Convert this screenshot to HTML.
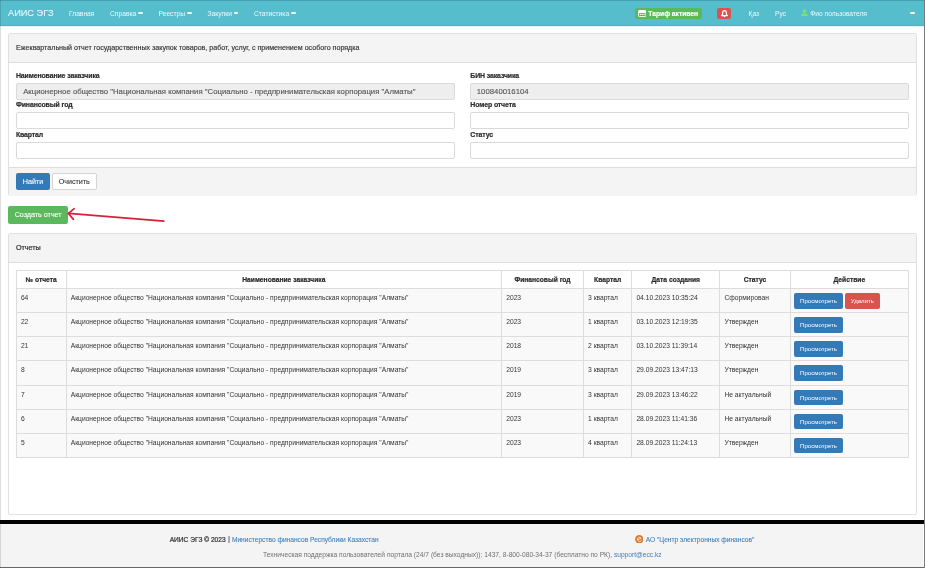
<!DOCTYPE html>
<html><head><meta charset="utf-8">
<style>
*{box-sizing:border-box;margin:0;padding:0}
html,body{width:925px;height:568px;overflow:hidden;background:#fff;font-family:"Liberation Sans",sans-serif;color:#333}
.abs{position:absolute}
#nav{left:0;top:0;width:925px;height:26px;background:#56bdcd;border-bottom:1px solid #4cb3c6}
.nt{position:absolute;color:#eef8fa;font-size:6.7px;line-height:8px;white-space:nowrap}
.brand{font-size:9.2px;line-height:10px;color:#e6f5f8;-webkit-text-stroke:0.12px currentColor}
.caret{display:inline-block;width:4.6px;height:2.3px;background:#f4fbfc;border-radius:1.2px;margin-left:2px;vertical-align:1.2px}
.panel{position:absolute;left:8px;width:909px;border:1px solid #e0e0e0;border-radius:2px;background:#fff}
.ph{position:absolute;left:0;top:0;width:100%;background:#f4f4f4;border-bottom:1px solid #ddd}
.pf{position:absolute;left:0;width:100%;background:#f4f4f4;border-top:1px solid #ddd}
.t{position:absolute;white-space:nowrap;line-height:8px;-webkit-text-stroke:0.15px currentColor}
.lbl{font-weight:bold;font-size:6.95px;letter-spacing:-0.12px;color:#2a2a2a;-webkit-text-stroke:0.18px currentColor}
.inp{position:absolute;height:17px;border:1px solid #dadada;border-radius:2px;background:#fff}
.inp.dis{background:#eee}
.btn{position:absolute;border-radius:2px;color:#fff;-webkit-text-stroke:0.1px currentColor;font-size:7.15px;line-height:8px;text-align:center;white-space:nowrap}
table{position:absolute;border-collapse:collapse;table-layout:fixed}
td,th{border:1px solid #ddd;font-size:6.7px;line-height:8px;vertical-align:top;white-space:nowrap;overflow:hidden}
th{font-weight:bold;text-align:center;background:#fff;vertical-align:middle}
td{background:#f9f9f9}
.hl{position:absolute;left:16.3px;width:892.2px;height:1px;background:#ddd}
.vl{position:absolute;top:270px;width:1px;height:187.7px;background:#ddd}
.th{font-weight:bold;font-size:6.7px;text-align:center;color:#2a2a2a;-webkit-text-stroke:0.2px currentColor}
.td{font-size:6.7px;-webkit-text-stroke:0}
.bb{position:absolute;background:#337ab7;color:#fff;border-radius:2px;height:15.5px;text-align:center;font-size:6.1px;line-height:15.5px;white-space:nowrap}
.br{background:#d9534f}
#wrap{position:absolute;left:0;top:0;width:925px;height:568px;will-change:transform}
</style></head><body><div id="wrap">

<div id="nav" class="abs">
  <div class="abs" style="left:0;top:0;width:925px;height:1px;background:#469fae"></div>
  <div class="nt brand" style="left:8px;top:7.6px">АИИС ЭГЗ</div>
  <div class="nt" style="left:69px;top:9.5px">Главная</div>
  <div class="nt" style="left:110px;top:9.5px">Справка<span class="caret"></span></div>
  <div class="nt" style="left:158.5px;top:9.5px">Реестры<span class="caret"></span></div>
  <div class="nt" style="left:207.5px;top:9.5px">Закупки<span class="caret"></span></div>
  <div class="nt" style="left:254px;top:9.5px">Статистика<span class="caret"></span></div>
  <div class="abs" style="left:634.8px;top:8.3px;width:67px;height:11.1px;background:#5cb85c;border-radius:2px"></div>
  <svg class="abs" style="left:638px;top:10px" width="8.4" height="7" viewBox="0 0 8.4 7"><rect x="0.5" y="0.5" width="7.4" height="6" rx="0.8" fill="none" stroke="#fff" stroke-width="0.9"/><rect x="0.5" y="0.5" width="7.4" height="2.6" fill="#fff"/><rect x="1.8" y="4" width="1.2" height="1" fill="#fff"/><rect x="3.6" y="4" width="1.2" height="1" fill="#fff"/><rect x="5.4" y="4" width="1.2" height="1" fill="#fff"/></svg>
  <div class="nt" style="left:648.3px;top:10px;font-weight:bold;color:#fff;-webkit-text-stroke:0.15px #fff">Тариф активен</div>
  <div class="abs" style="left:717px;top:8.4px;width:13.8px;height:11px;background:#d9534f;border-radius:2px"></div>
  <svg class="abs" style="left:720.5px;top:9.8px" width="7" height="7.4" viewBox="0 0 7 7.4"><path d="M3.5 0.6 C2 0.6 1.6 1.8 1.6 3 L1.6 4.4 L0.6 5.6 L6.4 5.6 L5.4 4.4 L5.4 3 C5.4 1.8 5 0.6 3.5 0.6 Z" fill="none" stroke="#fff" stroke-width="1.1" stroke-linejoin="round"/><circle cx="3.5" cy="6.5" r="0.8" fill="#fff"/></svg>
  <div class="nt" style="left:748.5px;top:9.5px">Қаз</div>
  <div class="nt" style="left:775px;top:9.5px">Рус</div>
  <svg class="abs" style="left:801px;top:8.8px" width="7" height="7" viewBox="0 0 7 7"><circle cx="3.5" cy="2" r="1.8" fill="#7ee06b"/><path d="M2.6 3.6 L4.4 3.6 L4.4 4.6 L6.8 5.6 L6.8 6.9 L0.2 6.9 L0.2 5.6 L2.6 4.6 Z" fill="#7ee06b"/></svg>
  <div class="nt" style="left:810.2px;top:9.5px">Фио пользователя</div>
  <div class="abs" style="left:909.6px;top:12px;width:5.4px;height:2.2px;background:#fff;border-radius:1.1px"></div>
</div>
<div class="abs" style="left:0;top:26px;width:925px;height:1px;background:#e3f4f7"></div>
<div class="abs" style="left:924px;top:0;width:1px;height:568px;background:#7a7a7a;z-index:5"></div>
<div class="abs" style="left:923px;top:525px;width:1px;height:41px;background:#fff;z-index:5"></div>
<div class="abs" style="left:0;top:0;width:1px;height:568px;background:rgba(0,0,0,0.13);z-index:5"></div>

<!-- panel 1 -->
<div class="panel" style="top:33px;height:162.5px">
  <div class="ph" style="height:29px"></div>
  <div class="t" style="left:7.1px;top:10px;font-size:7.12px">Ежеквартальный отчет государственных закупок товаров, работ, услуг, с применением особого порядка</div>
  <div class="t lbl" style="left:6.9px;top:38px">Наименование заказчика</div>
  <div class="inp dis" style="left:7px;top:49px;width:439px"></div>
  <div class="t" style="left:14.2px;top:54px;font-size:7.78px;color:#555;-webkit-text-stroke:0.12px currentColor">Акционерное общество "Национальная компания "Социально - предпринимательская корпорация "Алматы"</div>
  <div class="t lbl" style="left:461.3px;top:38px">БИН заказчика</div>
  <div class="inp dis" style="left:461px;top:49px;width:439px"></div>
  <div class="t" style="left:467.8px;top:54px;font-size:7.78px;color:#555;-webkit-text-stroke:0.12px currentColor">100840016104</div>
  <div class="t lbl" style="left:6.9px;top:67px">Финансовый год</div>
  <div class="inp" style="left:7px;top:78px;width:439px"></div>
  <div class="t lbl" style="left:461.3px;top:67px">Номер отчета</div>
  <div class="inp" style="left:461px;top:78px;width:439px"></div>
  <div class="t lbl" style="left:6.9px;top:97px">Квартал</div>
  <div class="inp" style="left:7px;top:108px;width:439px"></div>
  <div class="t lbl" style="left:461.3px;top:97px">Статус</div>
  <div class="inp" style="left:461px;top:108px;width:439px"></div>
  <div class="pf" style="top:133px;height:28.5px"></div>
  <div class="btn" style="left:7px;top:139px;width:34px;height:17.3px;background:#337ab7;padding-top:5.2px">Найти</div>
  <div class="btn" style="left:43px;top:139px;width:44.5px;height:17.3px;background:#fff;border:1px solid #d4d4d4;color:#333;padding-top:4.2px">Очистить</div>
</div>

<div class="btn" style="left:8px;top:206px;width:60.3px;height:17.5px;background:#5cb85c;padding-top:5.2px">Создать отчет</div>

<svg class="abs" style="left:60px;top:200px" width="120" height="30" viewBox="60 200 120 30"><g fill="none" stroke="#d8203a" stroke-width="1.7" stroke-linecap="round" stroke-linejoin="round"><path d="M163.8 221.1 L68.6 213.4"/><path d="M74.2 208.7 L68.4 213.4 L73.4 219.4"/></g></svg>
<!-- panel 2 -->
<div class="panel" style="top:233px;height:282px">
  <div class="ph" style="height:29px"></div>
  <div class="t" style="left:6.9px;top:10px;font-size:7.2px;-webkit-text-stroke:0.22px currentColor">Отчеты</div>
</div>
<div class="abs" style="left:16.3px;top:288.7px;width:892.2px;height:168.5px;background:#f9f9f9"></div>
<div class="hl" style="top:270.0px"></div>
<div class="hl" style="top:288.2px"></div>
<div class="hl" style="top:312.3px"></div>
<div class="hl" style="top:336.3px"></div>
<div class="hl" style="top:360.4px"></div>
<div class="hl" style="top:384.5px"></div>
<div class="hl" style="top:408.5px"></div>
<div class="hl" style="top:432.6px"></div>
<div class="hl" style="top:456.7px"></div>
<div class="vl" style="left:15.8px"></div>
<div class="vl" style="left:65.6px"></div>
<div class="vl" style="left:501.1px"></div>
<div class="vl" style="left:583.0px"></div>
<div class="vl" style="left:631.3px"></div>
<div class="vl" style="left:719.3px"></div>
<div class="vl" style="left:789.7px"></div>
<div class="vl" style="left:908.0px"></div>
<div class="t th" style="left:16.3px;width:49.8px;top:276.0px">№ отчета</div>
<div class="t th" style="left:66.1px;width:435.5px;top:276.0px">Наименование заказчика</div>
<div class="t th" style="left:501.6px;width:81.9px;top:276.0px">Финансовый год</div>
<div class="t th" style="left:583.5px;width:48.3px;top:276.0px">Квартал</div>
<div class="t th" style="left:631.8px;width:88.0px;top:276.0px">Дата создания</div>
<div class="t th" style="left:719.8px;width:70.4px;top:276.0px">Статус</div>
<div class="t th" style="left:790.2px;width:118.3px;top:276.0px">Действие</div>
<div class="t td" style="left:20.9px;top:294.2px">64</div>
<div class="t td" style="left:70.7px;top:294.2px">Акционерное общество &quot;Национальная компания &quot;Социально - предпринимательская корпорация &quot;Алматы&quot;</div>
<div class="t td" style="left:506.2px;top:294.2px">2023</div>
<div class="t td" style="left:588.1px;top:294.2px">3 квартал</div>
<div class="t td" style="left:636.4px;top:294.2px">04.10.2023 10:35:24</div>
<div class="t td" style="left:724.4px;top:294.2px">Сформирован</div>
<div class="bb" style="left:794.1px;top:293.2px;width:48.9px">Просмотреть</div>
<div class="bb br" style="left:845px;top:293.2px;width:34.8px">Удалить</div>
<div class="t td" style="left:20.9px;top:318.3px">22</div>
<div class="t td" style="left:70.7px;top:318.3px">Акционерное общество &quot;Национальная компания &quot;Социально - предпринимательская корпорация &quot;Алматы&quot;</div>
<div class="t td" style="left:506.2px;top:318.3px">2023</div>
<div class="t td" style="left:588.1px;top:318.3px">1 квартал</div>
<div class="t td" style="left:636.4px;top:318.3px">03.10.2023 12:19:35</div>
<div class="t td" style="left:724.4px;top:318.3px">Утвержден</div>
<div class="bb" style="left:794.1px;top:317.3px;width:48.9px">Просмотреть</div>
<div class="t td" style="left:20.9px;top:342.3px">21</div>
<div class="t td" style="left:70.7px;top:342.3px">Акционерное общество &quot;Национальная компания &quot;Социально - предпринимательская корпорация &quot;Алматы&quot;</div>
<div class="t td" style="left:506.2px;top:342.3px">2018</div>
<div class="t td" style="left:588.1px;top:342.3px">2 квартал</div>
<div class="t td" style="left:636.4px;top:342.3px">03.10.2023 11:39:14</div>
<div class="t td" style="left:724.4px;top:342.3px">Утвержден</div>
<div class="bb" style="left:794.1px;top:341.3px;width:48.9px">Просмотреть</div>
<div class="t td" style="left:20.9px;top:366.4px">8</div>
<div class="t td" style="left:70.7px;top:366.4px">Акционерное общество &quot;Национальная компания &quot;Социально - предпринимательская корпорация &quot;Алматы&quot;</div>
<div class="t td" style="left:506.2px;top:366.4px">2019</div>
<div class="t td" style="left:588.1px;top:366.4px">3 квартал</div>
<div class="t td" style="left:636.4px;top:366.4px">29.09.2023 13:47:13</div>
<div class="t td" style="left:724.4px;top:366.4px">Утвержден</div>
<div class="bb" style="left:794.1px;top:365.4px;width:48.9px">Просмотреть</div>
<div class="t td" style="left:20.9px;top:390.5px">7</div>
<div class="t td" style="left:70.7px;top:390.5px">Акционерное общество &quot;Национальная компания &quot;Социально - предпринимательская корпорация &quot;Алматы&quot;</div>
<div class="t td" style="left:506.2px;top:390.5px">2019</div>
<div class="t td" style="left:588.1px;top:390.5px">3 квартал</div>
<div class="t td" style="left:636.4px;top:390.5px">29.09.2023 13:46:22</div>
<div class="t td" style="left:724.4px;top:390.5px">Не актуальный</div>
<div class="bb" style="left:794.1px;top:389.5px;width:48.9px">Просмотреть</div>
<div class="t td" style="left:20.9px;top:414.5px">6</div>
<div class="t td" style="left:70.7px;top:414.5px">Акционерное общество &quot;Национальная компания &quot;Социально - предпринимательская корпорация &quot;Алматы&quot;</div>
<div class="t td" style="left:506.2px;top:414.5px">2023</div>
<div class="t td" style="left:588.1px;top:414.5px">1 квартал</div>
<div class="t td" style="left:636.4px;top:414.5px">28.09.2023 11:41:36</div>
<div class="t td" style="left:724.4px;top:414.5px">Не актуальный</div>
<div class="bb" style="left:794.1px;top:413.5px;width:48.9px">Просмотреть</div>
<div class="t td" style="left:20.9px;top:438.6px">5</div>
<div class="t td" style="left:70.7px;top:438.6px">Акционерное общество &quot;Национальная компания &quot;Социально - предпринимательская корпорация &quot;Алматы&quot;</div>
<div class="t td" style="left:506.2px;top:438.6px">2023</div>
<div class="t td" style="left:588.1px;top:438.6px">4 квартал</div>
<div class="t td" style="left:636.4px;top:438.6px">28.09.2023 11:24:13</div>
<div class="t td" style="left:724.4px;top:438.6px">Утвержден</div>
<div class="bb" style="left:794.1px;top:437.6px;width:48.9px">Просмотреть</div>

<div class="abs" style="left:0;top:520px;width:925px;height:4px;background:#000"></div>
<div class="abs" style="left:0;top:524px;width:925px;height:44px;background:#f4f4f4;border-bottom:1.5px solid #666"></div>
<div class="t" style="left:169.7px;top:535.5px;font-size:6.62px;color:#333;-webkit-text-stroke:0.22px currentColor">АИИС ЭГЗ © 2023</div>
<div class="abs" style="left:228.3px;top:536px;width:1.4px;height:6.8px;background:#adadad"></div>
<div class="t" style="left:231.9px;top:535.5px;font-size:6.63px;color:#3d7fbb;-webkit-text-stroke:0.08px currentColor">Министерство финансов Республики Казахстан</div>
<svg class="abs" style="left:634.8px;top:534.7px" width="8.6" height="8.6" viewBox="0 0 10 10"><circle cx="5" cy="5" r="4.9" fill="#d7782f"/><path d="M2.6 5.2 L7.2 4 C6.8 2.6 5.2 2.2 4 2.8 C2.6 3.6 2.5 5.8 3.6 6.9 C4.6 7.8 6.3 7.6 7.3 6.6" fill="none" stroke="#fbe7d0" stroke-width="1.1" stroke-linecap="round"/></svg>
<div class="t" style="left:645.7px;top:535.5px;font-size:6.62px;color:#3d7fbb;-webkit-text-stroke:0.08px currentColor">АО "Центр электронных финансов"</div>
<div class="t" style="left:263px;top:550.5px;font-size:6.66px;color:#707070;-webkit-text-stroke:0">Техническая поддержка пользователей портала (24/7 (без выходных)): 1437, 8-800-080-34-37 (бесплатно по РК), <span style="color:#3d7fbb">support@ecc.kz</span></div>
</div></body></html>
